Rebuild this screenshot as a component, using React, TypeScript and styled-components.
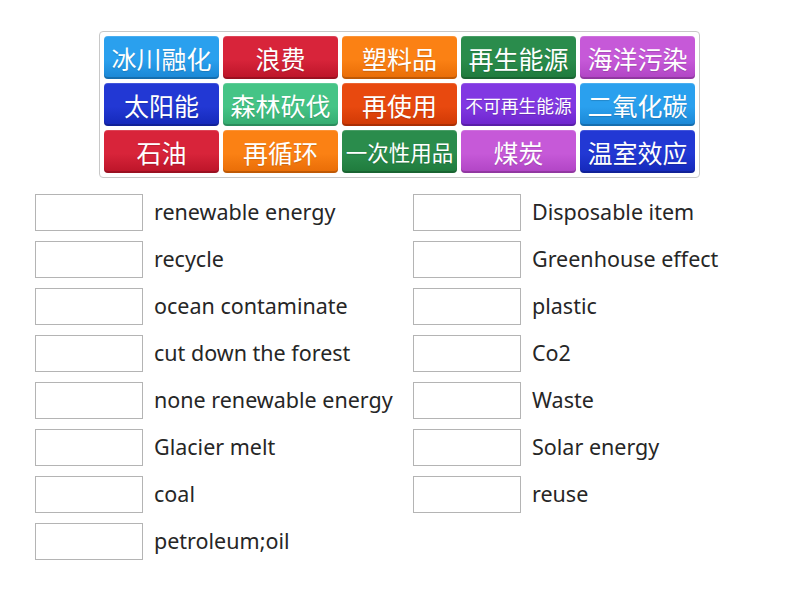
import React from "react";
import styled, { createGlobalStyle } from "styled-components";

const Global = createGlobalStyle`
  html, body { margin: 0; padding: 0; background: #fff; }
  body { font-family: "Noto Sans", "Liberation Sans", sans-serif; }
`;

const Page = styled.div`
  width: 800px;
  height: 600px;
  display: flex;
  flex-direction: column;
  align-items: flex-start;
  padding-top: 31px;
  box-sizing: border-box;
`;

const Bank = styled.div`
  margin-left: 99px;
  width: 601px;
  box-sizing: border-box;
  border: 1px solid #c8c8c8;
  border-radius: 4px;
  padding: 4px;
  display: grid;
  grid-template-columns: repeat(5, 115px);
  grid-auto-rows: 43px;
  gap: 4px;
`;

const Tile = styled.div<{ $c: string; $d: string; $size: number }>`
  display: flex;
  align-items: center;
  justify-content: center;
  border-radius: 4px;
  color: #fff;
  font-family: "Noto Sans CJK SC", sans-serif;
  font-size: ${(p) => p.$size}px;
  white-space: nowrap;
  background: linear-gradient(to bottom, ${(p) => p.$c} 0%, ${(p) => p.$c} 55%, ${(p) => p.$d} 100%);
  box-shadow: inset 0 -2px 0 rgba(0, 0, 0, 0.18), inset 0 1px 0 rgba(255, 255, 255, 0.15);
  text-shadow: 0 1px 1px rgba(0, 0, 0, 0.15);
`;

const Lists = styled.div`
  margin-top: 16px;
  margin-left: 35px;
  display: grid;
  grid-template-columns: 378px 300px;
`;

const Column = styled.div`
  display: flex;
  flex-direction: column;
  gap: 10px;
`;

const Row = styled.div`
  display: flex;
  align-items: center;
  height: 37px;
`;

const Slot = styled.div`
  width: 108px;
  height: 37px;
  box-sizing: border-box;
  border: 1px solid #b4b4b4;
  background: #fff;
  flex: none;
`;

const Label = styled.span`
  margin-left: 11px;
  font-size: 21.5px;
  color: #262626;
  white-space: nowrap;
  position: relative;
  top: -1px;
`;

const BLUE_L = ["#2aa0ee", "#1a86d4"];
const RED = ["#d8243a", "#bb1428"];
const ORANGE = ["#fb8114", "#e86c06"];
const GREEN = ["#2a8c4c", "#1f7a3c"];
const ORCHID = ["#c659d8", "#b044c4"];
const BLUE = ["#2238d4", "#1428b8"];
const MINT = ["#45c486", "#34ab70"];
const ORED = ["#e8490f", "#cf3804"];
const PURPLE = ["#8138e2", "#6c24cc"];

const tiles: [string, string[], number][] = [
  ["冰川融化", BLUE_L, 25],
  ["浪费", RED, 25],
  ["塑料品", ORANGE, 25],
  ["再生能源", GREEN, 25],
  ["海洋污染", ORCHID, 25],
  ["太阳能", BLUE, 25],
  ["森林砍伐", MINT, 25],
  ["再使用", ORED, 25],
  ["不可再生能源", PURPLE, 17.8],
  ["二氧化碳", BLUE_L, 25],
  ["石油", RED, 25],
  ["再循环", ORANGE, 25],
  ["一次性用品", GREEN, 21.5],
  ["煤炭", ORCHID, 25],
  ["温室效应", BLUE, 25],
];

const left = [
  "renewable energy",
  "recycle",
  "ocean contaminate",
  "cut down the forest",
  "none renewable energy",
  "Glacier melt",
  "coal",
  "petroleum;oil",
];
const right = [
  "Disposable item",
  "Greenhouse effect",
  "plastic",
  "Co2",
  "Waste",
  "Solar energy",
  "reuse",
];

export default function App() {
  return (
    <Page>
      <Global />
      <Bank>
        {tiles.map(([t, c, s]) => (
          <Tile key={t} $c={c[0]} $d={c[1]} $size={s}>
            {t}
          </Tile>
        ))}
      </Bank>
      <Lists>
        <Column>
          {left.map((t) => (
            <Row key={t}>
              <Slot />
              <Label>{t}</Label>
            </Row>
          ))}
        </Column>
        <Column>
          {right.map((t) => (
            <Row key={t}>
              <Slot />
              <Label>{t}</Label>
            </Row>
          ))}
        </Column>
      </Lists>
    </Page>
  );
}
